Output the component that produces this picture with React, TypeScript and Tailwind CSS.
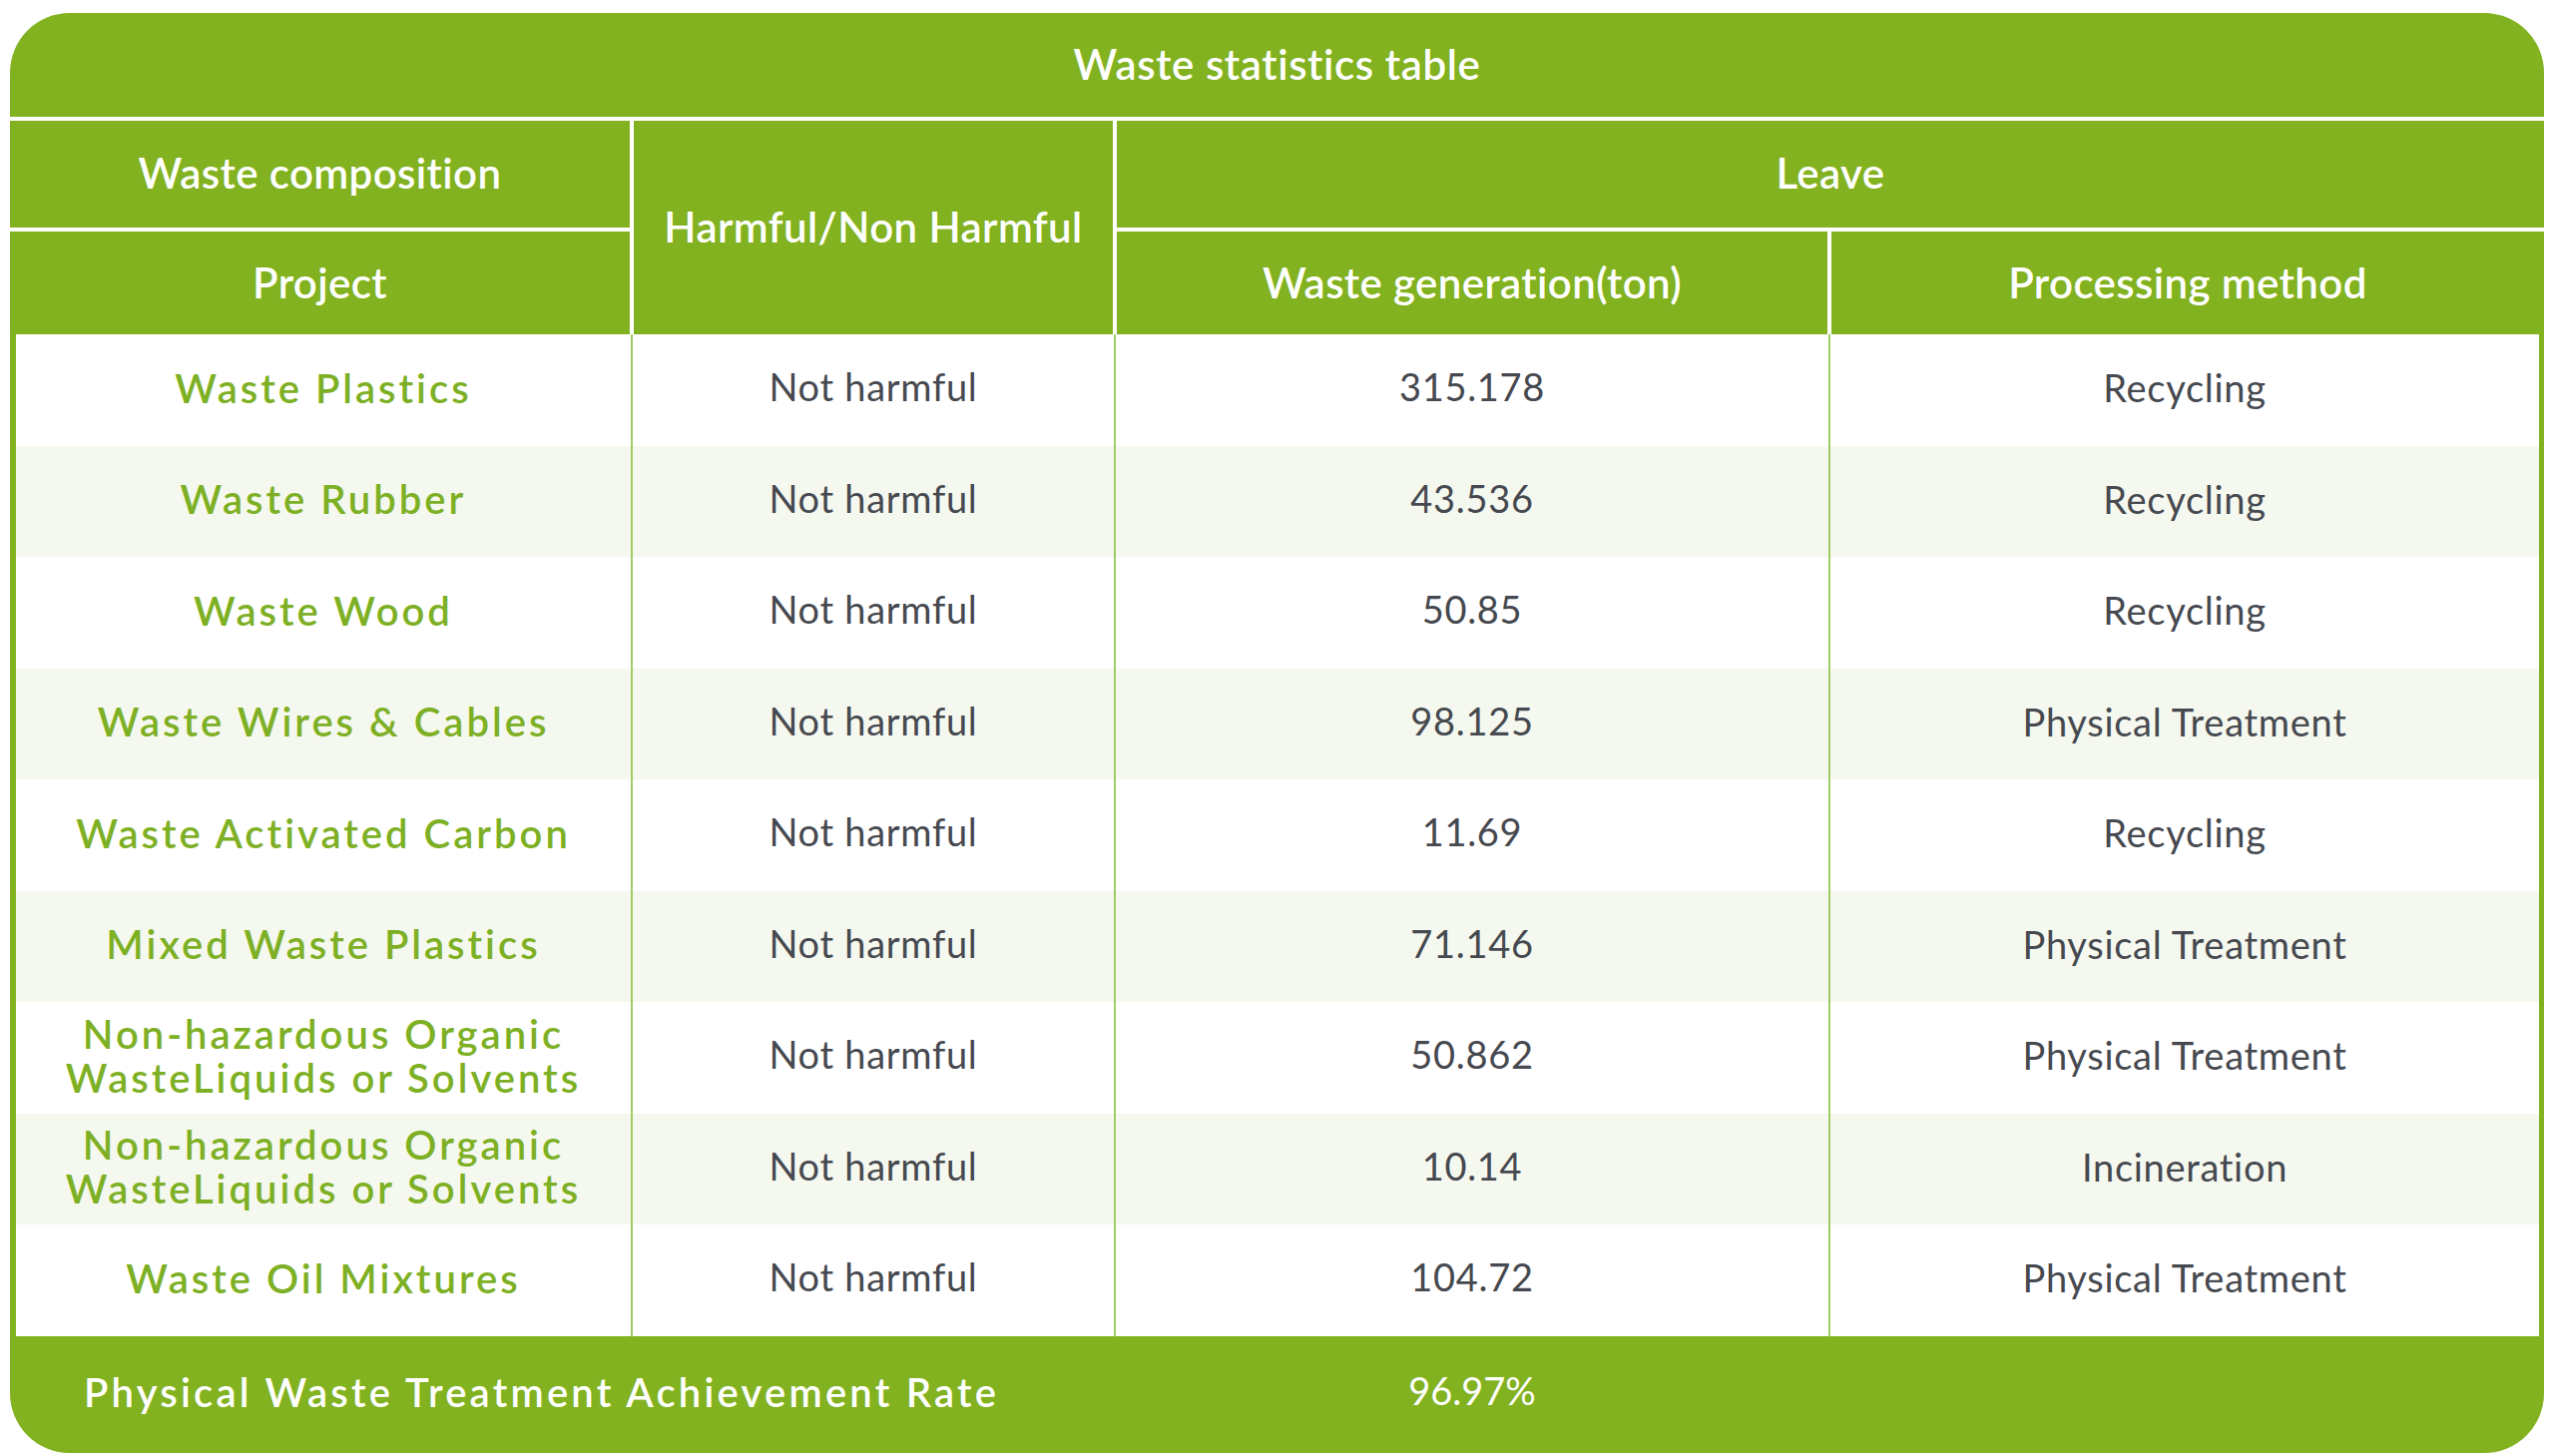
const rows = [
  { project: ['Waste Plastics'], harmful: 'Not harmful', amount: '315.178', method: 'Recycling' },
  { project: ['Waste Rubber'], harmful: 'Not harmful', amount: '43.536', method: 'Recycling' },
  { project: ['Waste Wood'], harmful: 'Not harmful', amount: '50.85', method: 'Recycling' },
  { project: ['Waste Wires & Cables'], harmful: 'Not harmful', amount: '98.125', method: 'Physical Treatment' },
  { project: ['Waste Activated Carbon'], harmful: 'Not harmful', amount: '11.69', method: 'Recycling' },
  { project: ['Mixed Waste Plastics'], harmful: 'Not harmful', amount: '71.146', method: 'Physical Treatment' },
  {
    project: ['Non-hazardous Organic', 'WasteLiquids or Solvents'],
    harmful: 'Not harmful',
    amount: '50.862',
    method: 'Physical Treatment'
  },
  {
    project: ['Non-hazardous Organic', 'WasteLiquids or Solvents'],
    harmful: 'Not harmful',
    amount: '10.14',
    method: 'Incineration'
  },
  { project: ['Waste Oil Mixtures'], harmful: 'Not harmful', amount: '104.72', method: 'Physical Treatment' }
];

export default function App() {
  return (
    <div className="min-h-screen bg-white pl-[10px] pt-[13px] font-['Lato','Liberation_Sans',sans-serif]">
      <div className="w-[2539px] overflow-hidden rounded-[60px] bg-white">
        {/* title */}
        <div className="flex h-[104px] items-center justify-center bg-[#82b220] pb-[2px] text-[42px] font-semibold tracking-[0.6px] text-white">
          Waste statistics table
        </div>

        {/* header */}
        <div className="mt-[4px] grid grid-cols-[621px_480px_712px_714px] grid-rows-[107px_103px] gap-[4px] bg-white text-[42px] font-semibold tracking-[0.4px] text-white">
          <div className="flex items-center justify-center bg-[#82b220] pb-[2px]">Waste composition</div>
          <div className="row-span-2 flex items-center justify-center bg-[#82b220] pb-[2px]">Harmful/Non Harmful</div>
          <div className="col-span-2 flex items-center justify-center bg-[#82b220] pb-[2px]">Leave</div>
          <div className="flex items-center justify-center bg-[#82b220]">Project</div>
          <div className="flex items-center justify-center bg-[#82b220]">Waste generation(ton)</div>
          <div className="flex items-center justify-center bg-[#82b220]">Processing method</div>
        </div>

        {/* body */}
        <div className="border-l-[6px] border-r-[5px] border-[#82b220]">
          {rows.map((row, index) => (
            <div
              key={index}
              className="grid h-[111.5px] grid-cols-[616px_482px_714px_710px] gap-[2px] bg-[#a3cb63]"
            >
              <div
                className={`flex flex-col items-center justify-center pb-[4px] text-[40px] font-semibold leading-[44px] tracking-[3px] text-[#7db024] ${index % 2 === 1 ? 'bg-[#f5f8ef]' : 'bg-white'}`}
              >
                {row.project.map((line) => (
                  <span key={line}>{line}</span>
                ))}
              </div>
              <div
                className={`flex items-center justify-center pb-[6px] text-[38px] tracking-[0.7px] text-[#46494f] ${index % 2 === 1 ? 'bg-[#f5f8ef]' : 'bg-white'}`}
              >
                {row.harmful}
              </div>
              <div
                className={`flex items-center justify-center pb-[6px] text-[38px] tracking-[0.7px] text-[#46494f] ${index % 2 === 1 ? 'bg-[#f5f8ef]' : 'bg-white'}`}
              >
                {row.amount}
              </div>
              <div
                className={`flex items-center justify-center pb-[4px] text-[38px] tracking-[0.7px] text-[#46494f] ${index % 2 === 1 ? 'bg-[#f5f8ef]' : 'bg-white'}`}
              >
                {row.method}
              </div>
            </div>
          ))}
        </div>

        {/* footer */}
        <div className="grid h-[117px] grid-cols-[1109px_712px_1fr] bg-[#82b220] text-white">
          <div className="flex items-center pb-[5px] pl-[74px] text-[40px] font-semibold tracking-[3.2px]">
            Physical Waste Treatment Achievement Rate
          </div>
          <div className="flex items-center justify-center pb-[8px] text-[38px]">96.97%</div>
          <div />
        </div>
      </div>
    </div>
  );
}
